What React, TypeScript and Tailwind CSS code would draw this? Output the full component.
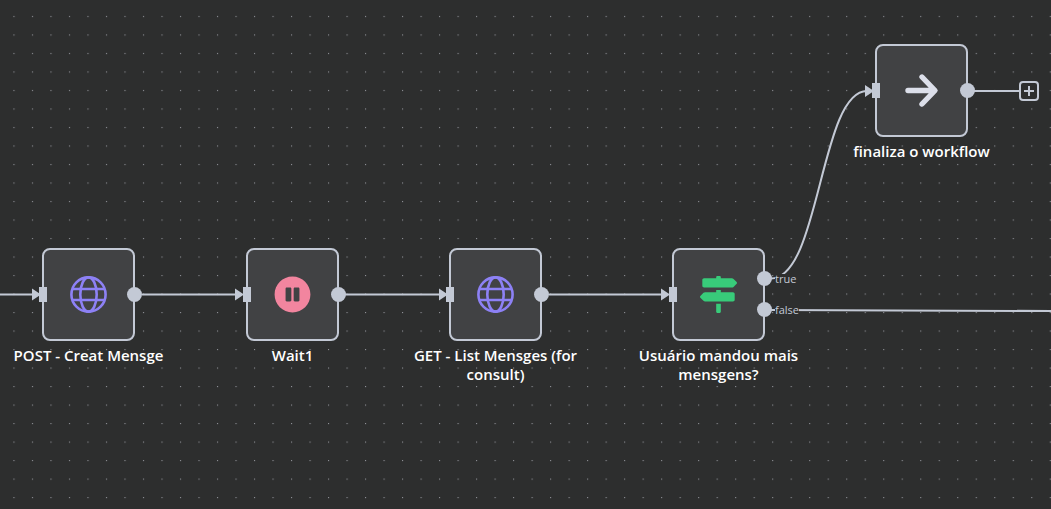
import type { ReactNode } from "react";
import { FaMapSigns, FaPauseCircle } from "react-icons/fa";

const WIRE = "#c3c9d5";

function GlobeIcon() {
  return (
    <svg viewBox="0 0 37 37" className="size-[37px]" fill="none" stroke="#8d81f5" strokeWidth="2.6" aria-hidden="true">
      <circle cx="18.5" cy="18.5" r="17.1" />
      <ellipse cx="18.5" cy="18.5" rx="8.2" ry="17.1" />
      <path d="M2.6 13h31.8M2.6 24h31.8" />
    </svg>
  );
}

function ArrowIcon() {
  return (
    <svg viewBox="0 0 37 37" className="size-[37px]" fill="none" stroke="#dcdfea" strokeWidth="5.4" strokeLinecap="round" strokeLinejoin="round" aria-hidden="true">
      <path d="M5 18.5h26M19 5l13 13.5L19 32" />
    </svg>
  );
}

type Output = { place: string; name?: string };

type NodeProps = {
  place: string;
  title: string;
  icon: ReactNode;
  outputs: Output[];
};

function WorkflowNode({ place, title, icon, outputs }: NodeProps) {
  return (
    <article className={`absolute flex w-[185px] flex-col items-center gap-[5px] ${place}`}>
      <div className="relative flex size-[93px] items-center justify-center rounded-lg border-2 border-[#c3c9d5] bg-[#414244]">
        {icon}
        <span className="absolute top-[37px] -left-[5px] h-[15px] w-2 bg-[#c3c9d5]" />
        {outputs.map((output) => (
          <div key={output.place} className={`absolute -right-[9px] flex size-[15px] items-center rounded-full bg-[#c3c9d5] ${output.place}`}>
            {output.name && (
              <span className="ml-[18px] bg-[#2d2e2e] text-[11px] leading-[9px] text-[#c3c9d5]">{output.name}</span>
            )}
          </div>
        ))}
      </div>
      <h2 className="text-center text-[15px] leading-[19px] font-semibold text-white">{title}</h2>
    </article>
  );
}

const single: Output[] = [{ place: "top-[37px]" }];

export default function App() {
  return (
    <main className="relative h-screen w-full overflow-hidden bg-[#2d2e2e] font-['Open_Sans',sans-serif]">
      <svg className="absolute inset-0 size-full" aria-hidden="true">
        <defs>
          <pattern id="grid" x="13.4" y="15.9" width="18.506" height="18.506" patternUnits="userSpaceOnUse">
            <rect width="1.1" height="1.1" fill="#909298" />
          </pattern>
        </defs>
        <rect width="100%" height="100%" fill="url(#grid)" />
        <g fill="none" stroke={WIRE} strokeWidth="2">
          <path d="M0 294.5H34M142 294.5H238M345 294.5H441M549 294.5H663M974 91H1019" />
          <path d="M771 278.5C820 278.5 820 91 867 91" />
          <path d="M771 310L1051 311" />
        </g>
        <g fill={WIRE}>
          <path d="M32 288.500l9 6-9 6zM235 288.500l9 6-9 6zM439 288.500l9 6-9 6zM661 288.500l9 6-9 6zM865 85l9 6-9 6z" />
        </g>
      </svg>

      <WorkflowNode place="top-[248px] left-[-4px]" title="POST - Creat Mensge" icon={<GlobeIcon />} outputs={single} />
      <WorkflowNode place="top-[248px] left-[200px]" title="Wait1" icon={<FaPauseCircle className="size-[37px] text-[#f2859f]" />} outputs={single} />
      <WorkflowNode place="top-[248px] left-[403px]" title="GET - List Mensges (for consult)" icon={<GlobeIcon />} outputs={single} />
      <WorkflowNode
        place="top-[248px] left-[626px]"
        title="Usuário mandou mais mensgens?"
        icon={<FaMapSigns className="size-[37px] text-[#38cb7a]" />}
        outputs={[
          { place: "top-[21px]", name: "true" },
          { place: "top-[52px]", name: "false" },
        ]}
      />
      <WorkflowNode place="top-[44px] left-[829px]" title="finaliza o workflow" icon={<ArrowIcon />} outputs={single} />

      <button
        type="button"
        aria-label="Add node"
        className="absolute top-[81px] left-[1019px] flex size-5 items-center justify-center rounded border-2 border-[#c3c9d5] bg-[#2d2e2e]"
      >
        <svg viewBox="0 0 10 10" className="size-[10px]" stroke={WIRE} strokeWidth="2" aria-hidden="true">
          <path d="M5 0v10M0 5h10" />
        </svg>
      </button>
    </main>
  );
}
